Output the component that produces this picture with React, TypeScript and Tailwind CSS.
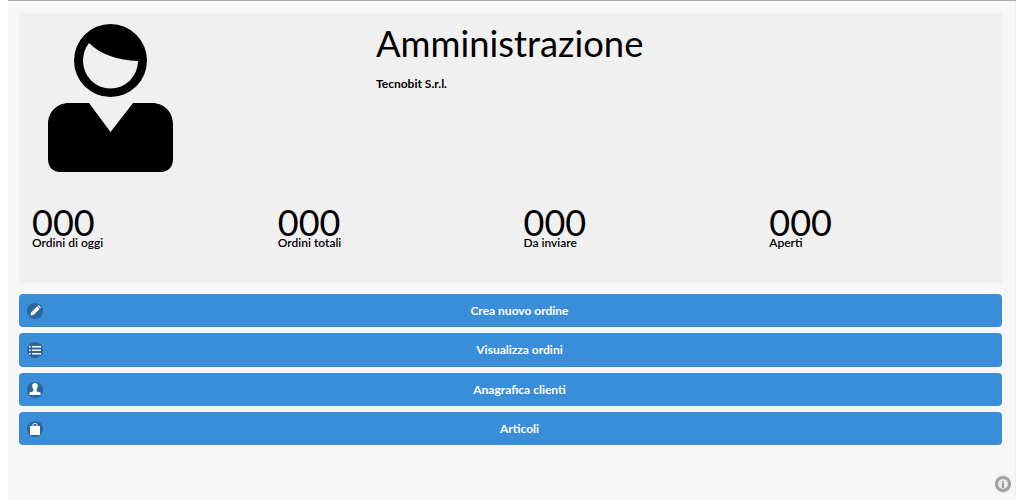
import React from "react";

const Stat = ({ n, label }: { n: string; label: string }) => (
  <div className="pl-[13px]">
    <div className="text-[36px] leading-[36px] text-black">{n}</div>
    <div className="text-[12px] leading-[12px] font-semibold text-black -mt-[3px]">{label}</div>
  </div>
);

const Btn = ({ label, icon, h }: { label: string; icon: React.ReactNode; h: string }) => (
  <div className={`relative flex items-center justify-center bg-[#3a8dd8] rounded-[4px] pl-[18px] ${h}`}>
    <span className="absolute left-[8px] top-1/2 -translate-y-1/2 w-[16px] h-[16px] rounded-full bg-[#2a659c] flex items-center justify-center">
      {icon}
    </span>
    <span className="text-[12px] font-bold text-white">{label}</span>
  </div>
);

export default function App() {
  return (
    <div className="w-[1024px] h-[500px] overflow-hidden bg-white font-['Lato','Liberation_Sans',sans-serif]">
      <div className="ml-[8px] w-[1008px] h-[500px] bg-[#f7f7f7] border-t border-[#aaaaaa] relative">
        <div className="pt-[12px] pl-[11px] w-[994px] flex flex-col">
          <div className="bg-[#f0f0f0] h-[270px] flex flex-col">
            <div className="flex h-[186px]">
              <div className="w-[357px] pl-[29px] pt-[11px] shrink-0">
                <svg width="126" height="149" viewBox="0 0 126 149">
                  <path fillRule="evenodd" fill="#000" d="M62.500 0a36.500 36.500 0 1 1 0 73a36.500 36.500 0 1 1 0-73ZM41 19C52 30 70 36.500 90 37A27.500 27.500 0 0 1 35 37C35 30 37 24 41 19Z" />
                  <path fill="#000" d="M21 79H41L62.500 108L85 79H104C116 79 125 88 125 100V135C125 143 120 148 113 148H12C5 148 0 143 0 135V100C0 88 9 79 21 79Z" />
                </svg>
              </div>
              <div className="pt-[8px]">
                <div className="text-[36.400px] leading-[44px] text-black">Amministrazione</div>
                <div className="text-[12px] leading-[16px] font-bold text-black mt-[11px]">Tecnobit S.r.l.</div>
              </div>
            </div>
            <div className="grid grid-cols-4 mt-[5px]">
              <Stat n="000" label="Ordini di oggi" />
              <Stat n="000" label="Ordini totali" />
              <Stat n="000" label="Da inviare" />
              <Stat n="000" label="Aperti" />
            </div>
          </div>
          <div className="flex flex-col gap-[6px] mt-[11px]">
            <Btn h="h-[33px]" label="Crea nuovo ordine" icon={
              <svg width="13" height="13" viewBox="0 0 13 13"><path fill="#fff" d="M1.500 11.500l.8-3.300L8 2.500l2.500 2.500-5.700 5.700ZM8.800 1.700a1 1 0 0 1 1.400 0l1.100 1.100a1 1 0 0 1 0 1.400l-.3.300L8.500 2Z" /></svg>
            } />
            <Btn h="h-[34px]" label="Visualizza ordini" icon={
              <svg width="12" height="11" viewBox="0 0 12 11"><path fill="#fff" d="M0 1h1.500v1.500H0ZM3 1h9v1.500H3ZM0 4.500h1.500v1.500H0ZM3 4.500h9v1.500H3ZM0 8h1.500v1.500H0ZM3 8h9v1.500H3Z" /></svg>
            } />
            <Btn h="h-[33px]" label="Anagrafica clienti" icon={
              <svg width="12" height="13" viewBox="0 0 12 13"><path fill="#fff" d="M6 0a2.800 2.800 0 0 1 2.800 2.800C8.800 5 7.800 6.200 7.500 6.800V8.200L11.500 9.500V12H.5V9.500L4.500 8.200V6.800C4.200 6.200 3.200 5 3.200 2.800A2.800 2.800 0 0 1 6 0Z" /></svg>
            } />
            <Btn h="h-[33px]" label="Articoli" icon={
              <svg width="10" height="12" viewBox="0 0 10 12"><path fill="#fff" fillRule="evenodd" d="M0 3h2.500V2a2.500 2 0 0 1 5 0V3H10V12H0ZM3.500 3h3V2a1.500 1.200 0 0 0-3 0Z" /></svg>
            } />
          </div>
        </div>
        <span className="absolute left-[987px] top-[475px] w-[16px] h-[16px] rounded-full bg-[#a0a0a0] ring-2 ring-[#f0f0f0] flex items-center justify-center">
          <span className="w-[10px] h-[10px] rounded-full bg-[#ececec] flex items-center justify-center text-[9px] leading-none font-bold text-[#666666]">i</span>
        </span>
        <div className="absolute right-0 top-0 bottom-0 w-px bg-[#eeeeee]" />
      </div>
    </div>
  );
}
